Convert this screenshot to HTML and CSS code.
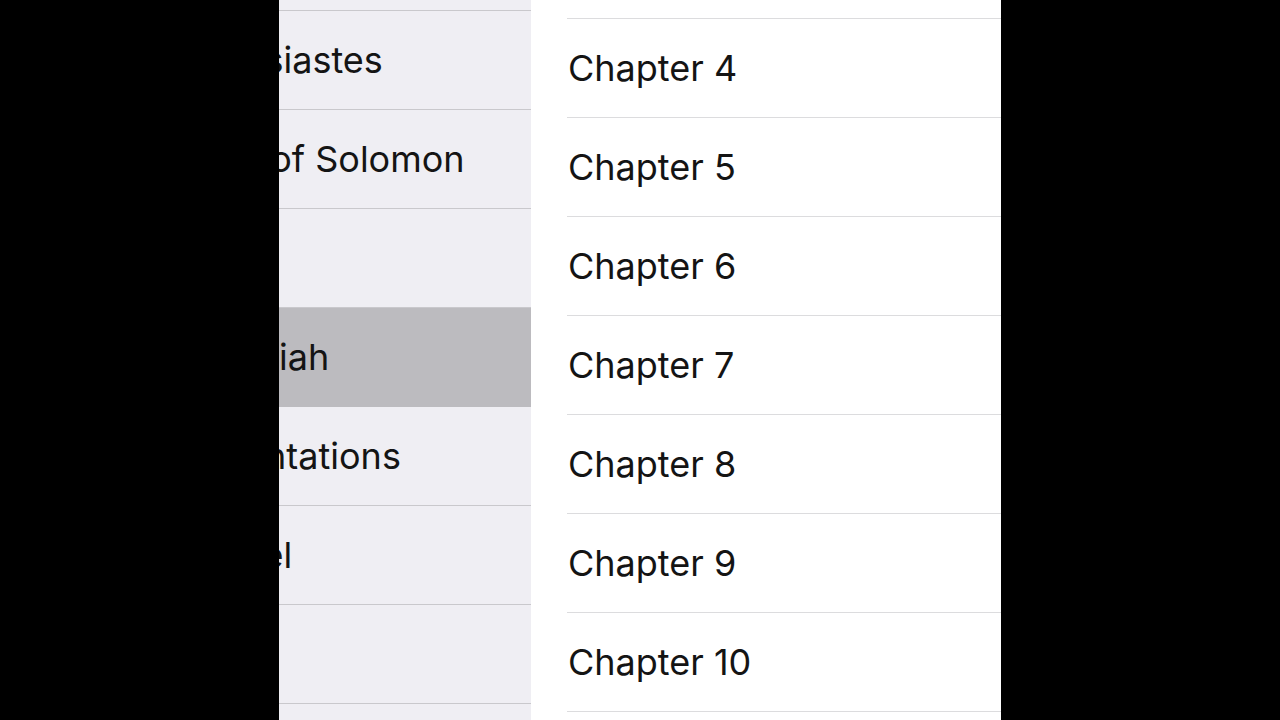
FILE: index.html
```html
<!DOCTYPE html>
<html>
<head>
<meta charset="utf-8">
<link rel="stylesheet" href="styles.css">
</head>
<body>
<div class="screen">
  <div class="gutter"></div>
  <div class="books">
    <div class="book-list">
      <div class="book"><span>Proverbs</span></div>
      <div class="book"><span>Ecclesiastes</span></div>
      <div class="book"><span>Song of Solomon</span></div>
      <div class="book"><span>Isaiah</span></div>
      <div class="book selected"><span>Jeremiah</span></div>
      <div class="book"><span>Lamentations</span></div>
      <div class="book"><span>Ezekiel</span></div>
      <div class="book"><span>Daniel</span></div>
      <div class="book"><span>Hosea</span></div>
    </div>
  </div>
  <div class="chapters">
    <div class="chapter-list">
      <div class="chapter">Chapter 3</div>
      <div class="chapter">Chapter 4</div>
      <div class="chapter">Chapter 5</div>
      <div class="chapter">Chapter 6</div>
      <div class="chapter">Chapter 7</div>
      <div class="chapter">Chapter 8</div>
      <div class="chapter">Chapter 9</div>
      <div class="chapter">Chapter 10</div>
      <div class="chapter">Chapter 11</div>
    </div>
  </div>
  <div class="gutter-right"></div>
</div>
</body>
</html>
```

FILE: styles.css
```css
html, body {
  margin: 0;
  padding: 0;
  background: #000;
  height: 720px;
  overflow: hidden;
}

.screen {
  display: flex;
  height: 720px;
  font-family: "Inter", "Liberation Sans", sans-serif;
  color: #141414;
}

.gutter {
  width: 279px;
  flex: none;
}

.books {
  width: 252px;
  flex: none;
  background: #efeef3;
  overflow: hidden;
}

.book-list {
  margin-top: -88px;
}

.book {
  height: 98px;
  border-bottom: 1px solid #c9c8cc;
  display: flex;
  align-items: center;
  font-size: 36px;
  white-space: nowrap;
}

.book span {
  margin-left: -107px;
}

.book.selected {
  background: #bcbbbf;
  border-bottom-color: #bcbbbf;
}

.chapters {
  width: 470px;
  flex: none;
  background: #fff;
  overflow: hidden;
}

.chapter-list {
  margin-top: -80px;
}

.chapter {
  height: 98px;
  margin-left: 36px;
  border-bottom: 1px solid #dcdcde;
  display: flex;
  align-items: center;
  padding-left: 1px;
  font-size: 36px;
  white-space: nowrap;
}

.gutter-right {
  flex: 1;
}
```
